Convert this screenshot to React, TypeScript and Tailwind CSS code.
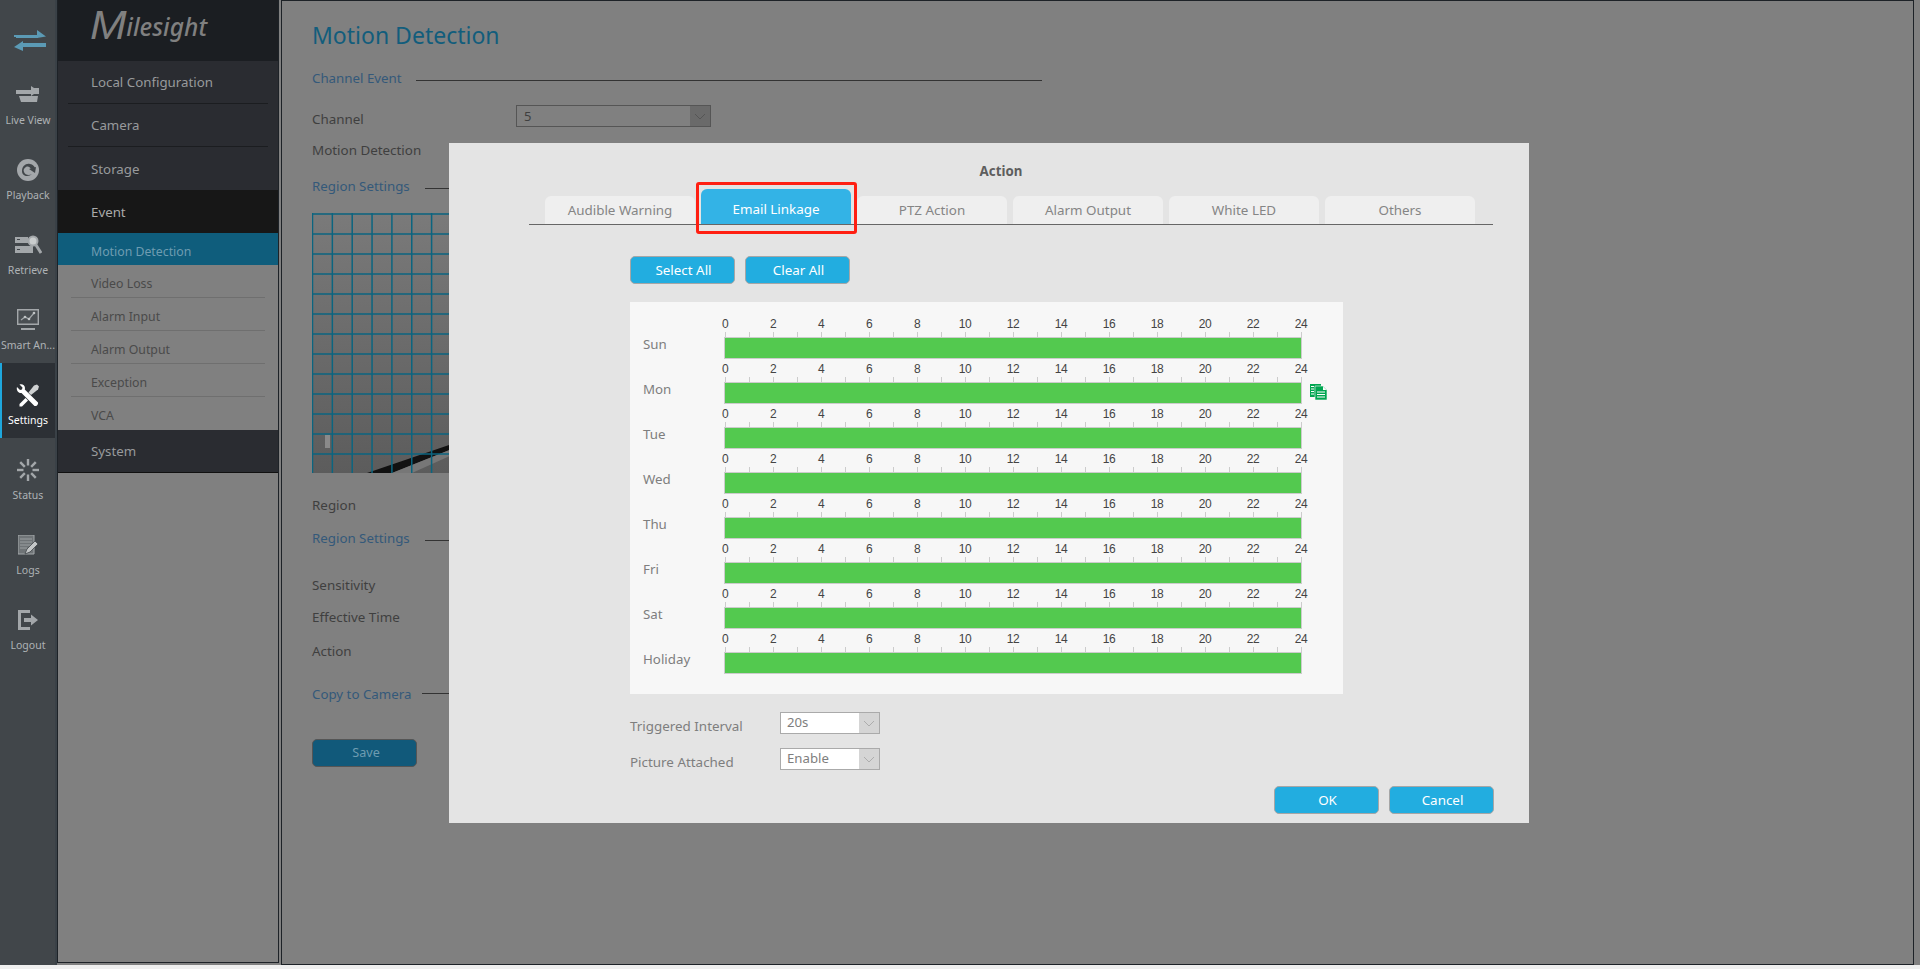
import React from "react";

const font = { fontFamily: '"Noto Sans", "Liberation Sans", sans-serif' };

function Swap() {
  return (
    <svg width="32" height="22" viewBox="0 0 32 22" fill="#5b9ab5">
      <path d="M0 6h23V1l9 6.500-9 1.500v-1H0z" />
      <path d="M2 7h22v2H2z" />
      <path d="M32 14H9v-2l-9 6 9 4v-4h23z" />
    </svg>
  );
}
function LiveIcon() {
  return (
    <svg width="24" height="18" viewBox="0 0 24 18" fill="#a3a7aa">
      <path d="M0 4h15v4H0z" />
      <path d="M17 2h6v6h-6z" />
      <path d="M15 0l3 2v6l-3 2z" />
      <path d="M3 10h19l-1 6H5z" />
    </svg>
  );
}
function PlayIcon() {
  return (
    <svg width="24" height="24" viewBox="0 0 24 24">
      <circle cx="12" cy="12" r="11" fill="#a3a7aa" />
      <path d="M6 13c0-5 4-8 8-7 3 .5 4 2 5 4l-4 1c-1-2-3-3-5-2-2 1-3 3-2 5 1 3 5 4 8 2-3 3-10 3-10-3z" fill="#41464a" />
      <path d="M13 11l7-2-1 6z" fill="#41464a" />
    </svg>
  );
}
function RetrieveIcon() {
  return (
    <svg width="27" height="20" viewBox="0 0 27 20">
      <path d="M0 2h13v6H0zM0 11h18v7H0z" fill="#a3a7aa" />
      <path d="M2 4h3v1H2zM2 14h3v1H2z" fill="#41464a" />
      <circle cx="18" cy="6" r="4.500" fill="#c9cccd" stroke="#a3a7aa" strokeWidth="2" />
      <path d="M21 10l5 8" stroke="#a3a7aa" strokeWidth="3" />
    </svg>
  );
}
function SmartIcon() {
  return (
    <svg width="22" height="22" viewBox="0 0 22 22" fill="none">
      <path d="M.7.7h20.600v14.600H.7z" stroke="#a3a7aa" strokeWidth="1.400" fill="#4a4f53" />
      <path d="M4 11l4-3 4 2 5-6" stroke="#a3a7aa" strokeWidth="1.200" />
      <circle cx="8" cy="8" r="1.300" fill="#c0c3c5" />
      <circle cx="12" cy="10" r="1.300" fill="#c0c3c5" />
      <circle cx="17" cy="4" r="1.300" fill="#c0c3c5" />
      <path d="M4 20h14" stroke="#a3a7aa" strokeWidth="2" />
    </svg>
  );
}
function SettingsIcon() {
  return (
    <svg width="23" height="23" viewBox="0 0 23 23" fill="#fff" className="-ml-[2px]">
      <path d="M1 3l3 3 2-.500.500-2L3.500.500C6-.500 9 1 9 4l-.200 1.500L22 18.500c.500 2-1.500 4-3.500 3.500L5.500 9C2.500 9.500 0 6 1 3z" />
      <path d="M12.500 8.500L18 1.500l3-1 2 2-1 3-7 5.500z" fill="#cfd1d2" />
      <path d="M9.500 14l-6 6 .000 2.500 2.500 0 6-6z" />
    </svg>
  );
}
function StatusIcon() {
  const a = [0, 45, 90, 135, 180, 225, 270, 315];
  return (
    <svg width="24" height="24" viewBox="0 0 24 24" stroke="#a3a7aa" strokeWidth="2.400">
      {a.map((d) => (
        <path key={d} d="M12 1v6.500" transform={`rotate(${d} 12 12)`} />
      ))}
    </svg>
  );
}
function LogsIcon() {
  return (
    <svg width="21" height="21" viewBox="0 0 21 21">
      <path d="M0 0h16v19H0z" fill="#6f7477" stroke="#a3a7aa" />
      <path d="M2 4h12M2 7h12M2 10h12M2 13h7" stroke="#9b9fa2" strokeWidth="1" />
      <path d="M7 19l2-5 8-8 3 3-8 8z" fill="#c3c6c7" stroke="#41464a" strokeWidth=".800" />
    </svg>
  );
}
function LogoutIcon() {
  return (
    <svg width="21" height="20" viewBox="0 0 21 20" fill="#a3a7aa">
      <path d="M0 0h12v3H3v14h9v3H0z" />
      <path d="M6 8h7V4.500l7 5.500-7 5.500V12H6z" />
    </svg>
  );
}
function Copy() {
  return (
    <svg width="17" height="16" viewBox="0 0 17 16" className="mt-[20px] ml-[8px]">
      <path d="M0 0h11v13H0z" fill="#00a651" />
      <path d="M1 2.500h3M1 5h3M1 7.500h3M1 10h3" stroke="#fff" strokeWidth="1" />
      <path d="M5 2h8l4 4v10H5z" fill="#00a651" stroke="#f7f7f7" strokeWidth=".600" />
      <path d="M13 2.500v3.500h3.500z" fill="#fff" />
      <path d="M7 8h8M7 10.500h8M7 13h8" stroke="#fff" strokeWidth="1" />
    </svg>
  );
}
function Chevron({ color }: { color: string }) {
  return (
    <svg width="12" height="7" viewBox="0 0 12 7" fill="none" stroke={color} strokeWidth="1">
      <path d="M1 1l5 5 5-5" />
    </svg>
  );
}

const rail = [
  { label: "Live View", icon: <LiveIcon /> },
  { label: "Playback", icon: <PlayIcon /> },
  { label: "Retrieve", icon: <RetrieveIcon /> },
  { label: "Smart An...", icon: <SmartIcon /> },
  { label: "Settings", icon: <SettingsIcon />, active: true },
  { label: "Status", icon: <StatusIcon /> },
  { label: "Logs", icon: <LogsIcon /> },
  { label: "Logout", icon: <LogoutIcon /> },
];

function Rail() {
  return (
    <div className="w-[57px] h-[965px] shrink-0 bg-[#41464a] border-r-2 border-[#3a4147]">
      <div className="h-[63px] flex justify-center pt-[29px] pl-[4px]">
        <Swap />
      </div>
      {rail.map((r) => (
        <div
          key={r.label}
          className={`h-[75px] relative flex flex-col items-center pt-[17px] pl-px ${r.active ? "bg-[#2c3035]" : ""}`}
        >
          {r.active && <div className="absolute left-0 top-0 bottom-0 w-[2px] bg-[#1ea7dd]" />}
          <div className="h-[30px] flex items-center justify-center">{r.icon}</div>
          <div
            className={`text-[10.5px] leading-[16px] mt-[2px] whitespace-nowrap ${r.active ? "text-white" : "text-[#aeb2b5]"}`}
          >
            {r.label}
          </div>
        </div>
      ))}
    </div>
  );
}

function NavTop({ label, line, strong }: { label: string; line?: boolean; strong?: boolean }) {
  return (
    <div className={`h-[43px] px-[10px] ${strong ? "bg-[#171717]" : "bg-[#2a2c31]"}`}>
      <div className={`h-full flex items-center pl-[23px] pt-[2px] text-[13.3px] ${line ? "border-b border-[#1b1d20]" : ""} ${strong ? "text-[#aaaaaa]" : "text-[#989a9c]"}`}>
        {label}
      </div>
    </div>
  );
}

function Nav() {
  return (
    <div className="w-[222px] h-[963px] shrink-0 border-x border-b border-[#1d2227] bg-[#808080]">
      <div className="h-[61px] bg-[#1b1e22] pl-[32px] text-[#808080] italic flex items-baseline whitespace-nowrap overflow-hidden">
        <span className="text-[40px] leading-[50px] origin-left scale-x-110" style={{ fontFamily: '"Liberation Sans", sans-serif' }}>M</span>
        <span className="text-[24.5px] leading-[50px] font-medium ml-[3px] -translate-y-[3px]">ilesight</span>
      </div>
      <NavTop label="Local Configuration" line />
      <NavTop label="Camera" line />
      <NavTop label="Storage" />
      <NavTop label="Event" strong />
      <div className="h-[32px] bg-[#0f5d7c] flex items-center pl-[33px] pt-[6px] text-[12.3px] text-[#6e9cb1]">Motion Detection</div>
      {["Video Loss", "Alarm Input", "Alarm Output", "Exception", "VCA"].map((t, i) => (
        <div key={t} className="h-[33px] px-[13px]">
          <div className={`h-full flex items-center pl-[20px] pt-[6px] text-[12.3px] text-[#4a4a4a] ${i < 4 ? "border-b border-[#6f6f6f]" : ""}`}>
            {t}
          </div>
        </div>
      ))}
      <div className="h-[43px] bg-[#2a2c31] border-b border-[#111] flex items-center pl-[33px] pt-[2px] text-[13.3px] text-[#989a9c]">System</div>
    </div>
  );
}

function Section({ label, w, offset, mt }: { label: string; w: string; offset: string; mt: string }) {
  return (
    <div className={`flex items-center h-[20px] w-[730px] ${mt}`}>
      <div className={`${w} shrink-0 pt-[3px] text-[13.3px] text-[#34597a] whitespace-nowrap`}>{label}</div>
      <div className={`flex-1 h-px bg-[#333] ${offset}`} />
    </div>
  );
}

function Field({ label, mt }: { label: string; mt: string }) {
  return <div className={`h-[20px] leading-[20px] text-[13.4px] text-[#3f3f3f] ${mt}`}>{label}</div>;
}

function Video() {
  const v = Array.from({ length: 33 }, (_, i) => i * 19.85);
  const h = Array.from({ length: 13 }, (_, i) => i * 20);
  return (
    <svg width="640" height="260" viewBox="0 0 640 260" className="mt-[18px] block">
      <defs>
        <linearGradient id="wall" x1="0" y1="0" x2="0" y2="1">
          <stop offset="0" stopColor="#7a7a7a" />
          <stop offset="1" stopColor="#5c5c5c" />
        </linearGradient>
      </defs>
      <rect width="640" height="260" fill="url(#wall)" />
      <path d="M55 260l85-29v5l-60 24z" fill="#111" />
      <path d="M80 260l60-24v6l-40 18z" fill="#777" />
      <path d="M13 222h5v13h-5z" fill="#8a8a8a" />
      {v.map((x) => (
        <path key={x} d={`M${x + 0.5} 0v260`} stroke="#0b6580" strokeWidth="1.500" />
      ))}
      {h.map((y) => (
        <path key={y} d={`M0 ${y + 1}h640`} stroke="#0b6580" strokeWidth="1.500" />
      ))}
    </svg>
  );
}

function Main() {
  return (
    <div className="ml-[2px] w-[1633px] h-[965px] shrink-0 border border-[#1d2227] bg-[#808080] pl-[30px]">
      <div className="mt-[18px] h-[32px] leading-[32px] text-[23px] text-[#125d7c]">Motion Detection</div>
      <Section label="Channel Event" w="w-[104px]" offset="mt-[6px]" mt="mt-[16px]" />
      <div className="flex mt-[18px] h-[22px]">
        <div className="w-[204px] pt-[4px] leading-[20px] text-[13.4px] text-[#3f3f3f]">Channel</div>
        <div className="w-[195px] h-[22px] border border-[#555] flex">
          <div className="flex-1 pl-[7px] text-[13px] leading-[20px] text-[#3f3f3f]">5</div>
          <div className="w-[20px] bg-[#6a6a6a] flex items-center justify-center">
            <Chevron color="#555" />
          </div>
        </div>
      </div>
      <Field label="Motion Detection" mt="mt-[13px]" />
      <Section label="Region Settings" w="w-[113px]" offset="mt-[6px]" mt="mt-[15px]" />
      <Video />
      <Field label="Region" mt="mt-[22px]" />
      <Section label="Region Settings" w="w-[113px]" offset="mt-[6px]" mt="mt-[12px]" />
      <Field label="Sensitivity" mt="mt-[28px]" />
      <Field label="Effective Time" mt="mt-[12px]" />
      <Field label="Action" mt="mt-[14px]" />
      <Section label="Copy to Camera" w="w-[110px]" offset="" mt="mt-[22px]" />
      <div className="mt-[36px] w-[105px] h-[28px] rounded-[5px] border border-[#555] bg-[#11597a] flex items-center justify-center pl-[3px] text-[12.6px] text-[#6e9cb1]">
        Save
      </div>
    </div>
  );
}

function Tab({ label }: { label: string }) {
  return (
    <div className="w-[150px] h-[28px] rounded-t-[6px] bg-[#efefef] flex items-center justify-center pt-px text-[13.4px] text-[#858585]">
      {label}
    </div>
  );
}

function Btn({ label }: { label: string }) {
  return (
    <div className="w-[105px] h-[28px] rounded-[5px] border border-[#a6a6a6] bg-[#22ade0] flex items-center justify-center pl-[2px] text-[13.4px] text-white">
      {label}
    </div>
  );
}

const days = ["Sun", "Mon", "Tue", "Wed", "Thu", "Fri", "Sat", "Holiday"];
const hourLabels = Array.from({ length: 13 }, (_, i) => i * 2);
const ticks = Array.from({ length: 25 }, (_, i) => i);

function Row({ day }: { day: string }) {
  return (
    <div className="flex h-[45px]">
      <div className="w-[94px] shrink-0 pl-[13px] pt-[15px] leading-[20px] text-[13.3px] text-[#7e7e7e]">{day}</div>
      <div className="w-[578px] shrink-0">
        <div
          className="flex h-[13px] -ml-[23px] text-[12px] leading-[11px] text-[#444] tracking-[-0.5px]"
          style={{ fontFamily: '"Liberation Sans", sans-serif' }}
        >
          {hourLabels.map((h) => (
            <div key={h} className="w-[48px] shrink-0 text-center">
              {h}
            </div>
          ))}
        </div>
        <div className="flex h-[5px] pl-px">
          {ticks.map((t) => (
            <div key={t} className={`${t === 24 ? "w-0" : "w-[24px]"} shrink-0 border-l border-[#cccccc]`} />
          ))}
        </div>
        <div className="h-[22px] bg-[#53c94f] border border-[#cccccc]" />
      </div>
      {day === "Mon" && <Copy />}
    </div>
  );
}

function Select({ value }: { value: string }) {
  return (
    <div className="w-[100px] h-[22px] border border-[#aaaaaa] bg-white flex">
      <div className="flex-1 pl-[6px] text-[13.2px] leading-[19px] text-[#7e7e7e]">{value}</div>
      <div className="w-[20px] bg-[#d5d5d5] flex items-center justify-center">
        <Chevron color="#adadad" />
      </div>
    </div>
  );
}

function FormRow({ label, value, mt }: { label: string; value: string; mt: string }) {
  return (
    <div className={`flex h-[22px] ${mt}`}>
      <div className="w-[150px] pt-[4px] leading-[20px] text-[13.4px] text-[#7e7e7e]">{label}</div>
      <Select value={value} />
    </div>
  );
}

function Modal() {
  return (
    <div className="absolute left-[449px] top-[143px] w-[1080px] h-[680px] bg-[#e4e4e4] flex flex-col">
      <div className="mt-[18px] h-[20px] leading-[20px] pl-[24px] text-center text-[13.3px] font-bold text-[#5e5e5e]">Action</div>
      <div className="mt-[8px] ml-[80px] w-[964px] h-[36px] pl-[16px] flex items-end gap-[6px] border-b border-[#666]">
        <Tab label="Audible Warning" />
        <div className="relative w-[150px] h-[35px] rounded-t-[6px] bg-[#33b3e6] pt-[6px] flex items-center justify-center text-[13.4px] text-white">
          Email Linkage
          <div className="absolute -left-[5px] -right-[6px] -top-[7px] -bottom-[10px] border-[3px] border-[#ff1f12] rounded-[3px]" />
        </div>
        <Tab label="PTZ Action" />
        <Tab label="Alarm Output" />
        <Tab label="White LED" />
        <Tab label="Others" />
      </div>
      <div className="ml-[181px]">
        <div className="mt-[31px] flex gap-[10px]">
          <Btn label="Select All" />
          <Btn label="Clear All" />
        </div>
        <div className="mt-[18px] w-[713px] h-[392px] bg-[#f7f7f7] pt-[17px]">
          {days.map((d) => (
            <Row key={d} day={d} />
          ))}
        </div>
        <FormRow label="Triggered Interval" value="20s" mt="mt-[18px]" />
        <FormRow label="Picture Attached" value="Enable" mt="mt-[14px]" />
      </div>
      <div className="mt-auto mb-[9px] pr-[35px] flex justify-end gap-[10px]">
        <Btn label="OK" />
        <Btn label="Cancel" />
      </div>
    </div>
  );
}

export default function App() {
  return (
    <div className="relative w-[1920px] h-[969px] overflow-hidden bg-[#efefef]" style={font}>
      <div className="flex h-[965px] bg-[#808080]">
        <Rail />
        <Nav />
        <Main />
      </div>
      <Modal />
    </div>
  );
}
